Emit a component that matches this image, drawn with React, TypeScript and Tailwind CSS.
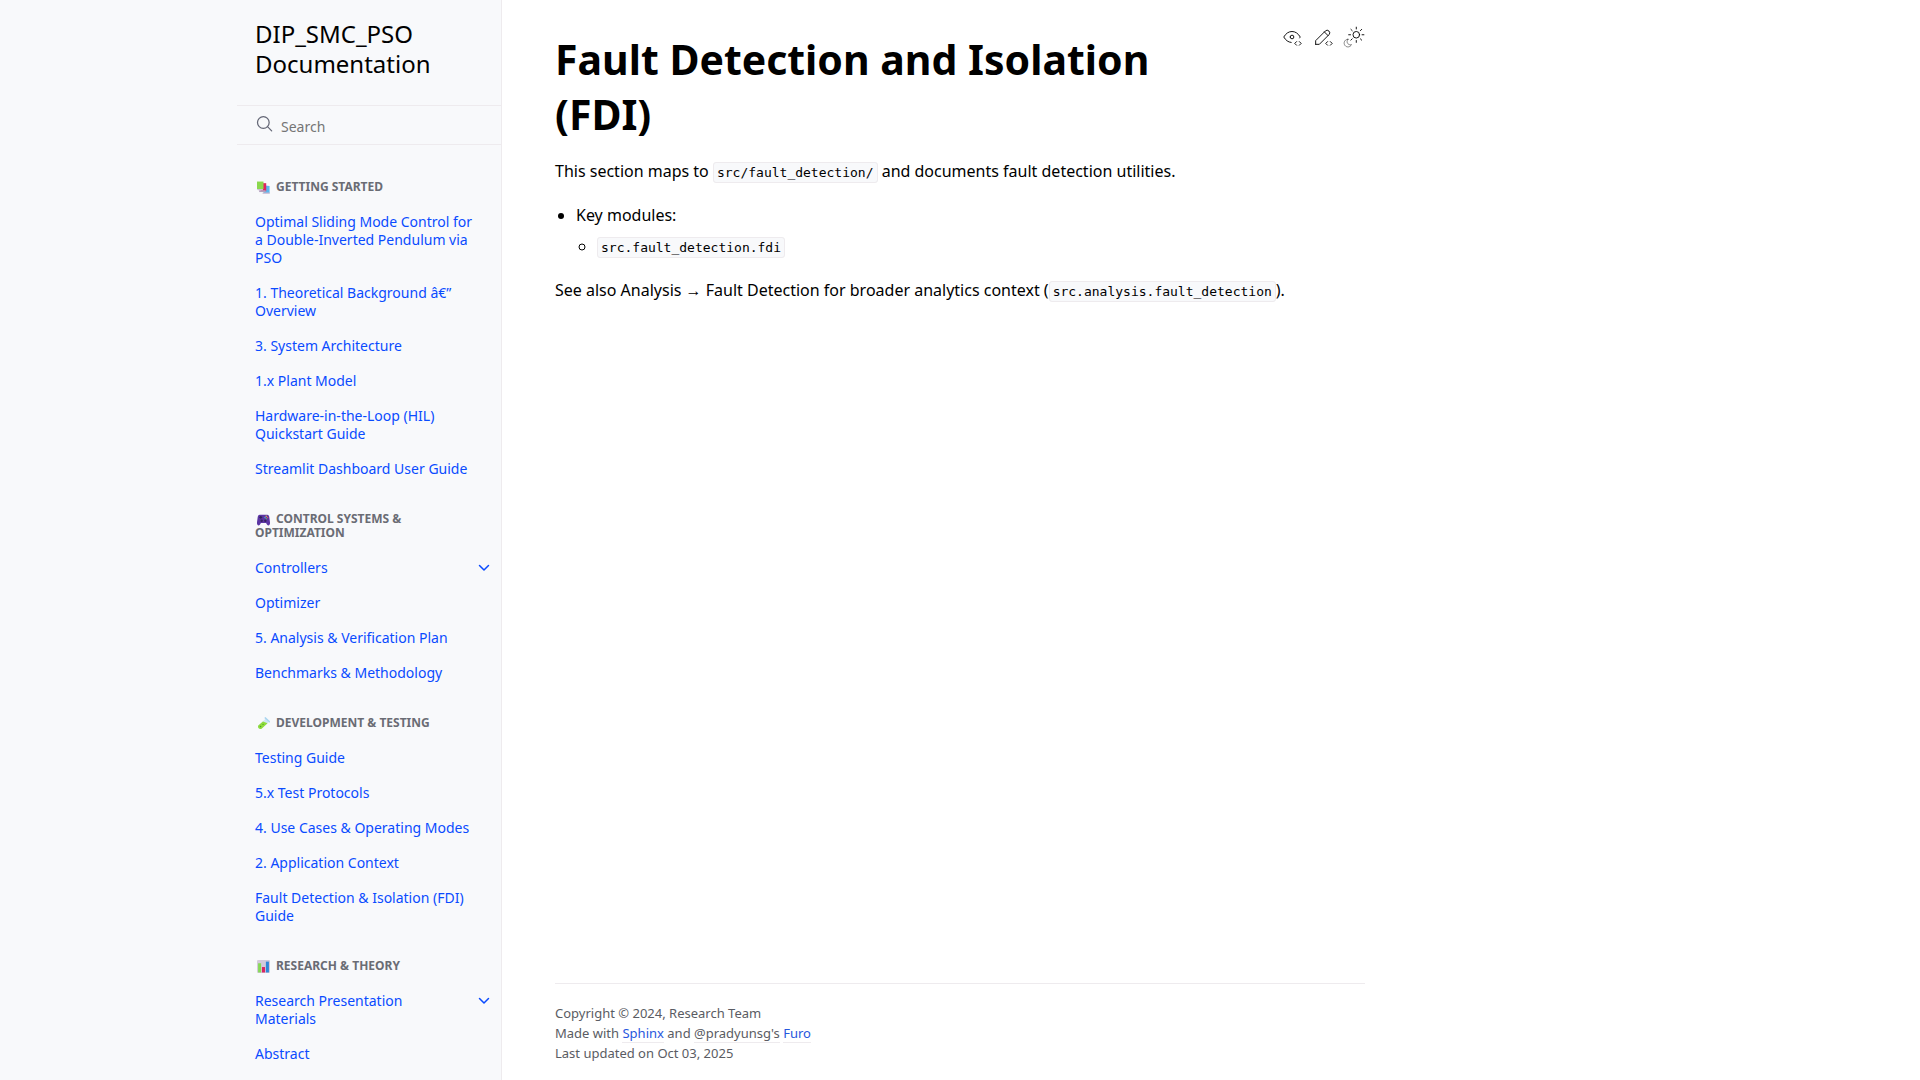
import type { ReactNode } from "react";

type NavItem = { label: string; expandable?: boolean };
type NavGroup = { caption: string; icon: ReactNode; items: NavItem[] };

function BooksIcon() {
  return (
    <svg className="inline-block h-[13px] w-[13px] align-[-3px]" viewBox="0 0 12 12" aria-hidden="true">
      <path d="M6 4l5.600.6v6.400H6z" fill="#5bb8ee" />
      <path d="M5.500 10.500h6.300v1.300H5z" fill="#c3b3cf" />
      <path d="M3.500 2h5v7.500h-5z" fill="#e0245e" />
      <path d="M2 8.500h6v1.700H2z" fill="#b3a0bd" />
      <path d="M0 .5h6v7H0z" fill="#8bd84e" />
      <path d="M0 7.300h5.500v1.300H.8z" fill="#cdbfd6" />
    </svg>
  );
}

function GamepadIcon() {
  return (
    <svg className="inline-block h-[13px] w-[13px] align-[-3px]" viewBox="0 0 12 12" aria-hidden="true">
      <path d="M2.500 1.500h7c1 0 1.500.8 1.800 2l.7 5c.2 1.500-.3 3-1.400 3-1 0-1.500-.8-2.200-2.300H3.600C2.900 10.700 2.400 11.500 1.400 11.500.3 11.500-.2 10 0 8.500l.7-5c.3-1.200.8-2 1.800-2z" fill="#5b35a3" />
      <path d="M2.200 4h2.600M3.500 2.700v2.600" stroke="#2d2450" strokeWidth="1" />
      <circle cx="8.500" cy="2.900" r=".7" fill="#e8c443" />
      <circle cx="9.700" cy="4.200" r=".7" fill="#d9506a" />
      <circle cx="7.400" cy="4.200" r=".7" fill="#46a5e0" />
      <circle cx="8.500" cy="5.400" r=".7" fill="#59c36a" />
      <circle cx="4.300" cy="7.200" r="1.100" fill="#35215f" />
      <circle cx="7.700" cy="7.200" r="1.100" fill="#35215f" />
    </svg>
  );
}

function TestTubeIcon() {
  return (
    <svg className="inline-block h-[13px] w-[13px] align-[-3px]" viewBox="0 0 12 12" aria-hidden="true">
      <path d="M8 1.500l3 3-6.800 6.300a2.200 2.200 0 0 1-3-3z" fill="#cfe6f5" />
      <path d="M5.500 4.200l4.200 1.500-5.500 5.100a2.200 2.200 0 0 1-3-3z" fill="#8fdc3c" />
      <path d="M7.600.8l3.900 3.600" stroke="#a9d5ef" strokeWidth="1.300" strokeLinecap="round" />
      <circle cx="3.300" cy="8.700" r=".7" fill="#4c9f2a" />
      <circle cx="5.600" cy="6.800" r=".6" fill="#4c9f2a" />
    </svg>
  );
}

function ChartIcon() {
  return (
    <svg className="inline-block h-[13px] w-[13px] align-[-3px]" viewBox="0 0 12 12" aria-hidden="true">
      <rect width="12" height="12" rx="1.200" fill="#d3cadb" />
      <rect x="1" y="3" width="2.800" height="8.500" fill="#86d955" />
      <rect x="4.600" y="6.500" width="2.800" height="5" fill="#d92662" />
      <rect x="8.200" y="1.500" width="2.800" height="10" fill="#2f87d8" />
    </svg>
  );
}

const groups: NavGroup[] = [
  {
    caption: "Getting Started",
    icon: <BooksIcon />,
    items: [
      { label: "Optimal Sliding Mode Control for a Double-Inverted Pendulum via PSO" },
      { label: "1. Theoretical Background â€” Overview" },
      { label: "3. System Architecture" },
      { label: "1.x Plant Model" },
      { label: "Hardware-in-the-Loop (HIL) Quickstart Guide" },
      { label: "Streamlit Dashboard User Guide" },
    ],
  },
  {
    caption: "Control Systems & Optimization",
    icon: <GamepadIcon />,
    items: [
      { label: "Controllers", expandable: true },
      { label: "Optimizer" },
      { label: "5. Analysis & Verification Plan" },
      { label: "Benchmarks & Methodology" },
    ],
  },
  {
    caption: "Development & Testing",
    icon: <TestTubeIcon />,
    items: [
      { label: "Testing Guide" },
      { label: "5.x Test Protocols" },
      { label: "4. Use Cases & Operating Modes" },
      { label: "2. Application Context" },
      { label: "Fault Detection & Isolation (FDI) Guide" },
    ],
  },
  {
    caption: "Research & Theory",
    icon: <ChartIcon />,
    items: [
      { label: "Research Presentation Materials", expandable: true },
      { label: "Abstract" },
    ],
  },
];

function Sidebar() {
  return (
    <aside className="flex h-screen w-[calc(50%-458px)] min-w-[265px] shrink-0 justify-end overflow-hidden border-r border-[#eeebee] bg-[#f8f9fb]">
      <div className="w-66">
        <a href="#home" className="block px-[18px] pt-[19px] pb-[26px] text-2xl leading-[30px] text-black">
          DIP_SMC_PSO Documentation
        </a>
        <form role="search" className="flex h-10 items-center border-y border-[#eeebee] pl-[18px]">
          <svg className="h-5 w-5 shrink-0 text-[#646776]" viewBox="0 0 24 24" fill="none" stroke="currentColor" strokeWidth="1.5" strokeLinecap="round" strokeLinejoin="round" aria-hidden="true">
            <circle cx="10" cy="9" r="7" />
            <path d="M20 19l-5-5" />
          </svg>
          <input type="search" aria-label="Search" placeholder="Search" className="ml-1.5 h-full min-w-0 flex-1 bg-transparent pt-0.5 text-sm outline-none placeholder:text-[#757575]" />
        </form>
        <nav aria-label="Documentation" className="pt-[9px]">
          {groups.map((g) => (
            <section key={g.caption}>
              <h2 className="px-[18px] pt-[26px] pb-2.5 text-xs leading-[14px] font-bold text-[#6a6c74] uppercase">
                <span className="mr-1.5 ml-0.5">{g.icon}</span>
                {g.caption}
              </h2>
              <ul>
                {g.items.map((item) => (
                  <li key={item.label} className="flex items-start">
                    <a href="#page" className="min-w-0 flex-1 pt-[9px] pr-5 pb-2 pl-[18px] text-sm leading-[18px] text-[#0a4bff]">
                      {item.label}
                    </a>
                    {item.expandable && (
                      <button type="button" aria-label={`Expand ${item.label}`} className="flex h-[35px] w-[35px] shrink-0 items-center justify-center text-[#0a4bff]">
                        <svg className="h-4 w-4" viewBox="0 0 16 16" fill="none" stroke="currentColor" strokeWidth="1.5" strokeLinecap="round" strokeLinejoin="round" aria-hidden="true">
                          <path d="M3.500 5.500l4.500 4.500 4.500-4.500" />
                        </svg>
                      </button>
                    )}
                  </li>
                ))}
              </ul>
            </section>
          ))}
        </nav>
      </div>
    </aside>
  );
}

function CodeMark() {
  return (
    <>
      <path d="M20 21l2-2-2-2" />
      <path d="M17 17l-2 2 2 2" />
    </>
  );
}

function PageTools() {
  const svg = {
    viewBox: "0 0 24 24",
    fill: "none",
    stroke: "currentColor",
    strokeWidth: 1,
    strokeLinecap: "round",
    strokeLinejoin: "round",
    "aria-hidden": true,
  } as const;
  return (
    <div className="float-right ml-18 flex gap-[9px] text-black">
      <a href="#source" aria-label="View this page">
        <svg className="h-[22px] w-[22px]" {...svg}>
          <path d="M10 12a2 2 0 1 0 4 0a2 2 0 0 0-4 0" />
          <path d="M11.11 17.958c-3.209-.307-5.91-2.293-8.11-5.958c2.4-4 5.4-6 9-6c3.6 0 6.6 2 9 6c-.21.352-.427.688-.647 1.008" />
          <CodeMark />
        </svg>
      </a>
      <a href="#edit" aria-label="Edit this page">
        <svg className="h-[22px] w-[22px]" {...svg}>
          <path d="M4 20h4l10.5-10.5a2.828 2.828 0 1 0-4-4l-10.5 10.5v4" />
          <path d="M13.5 6.5l4 4" />
          <CodeMark />
        </svg>
      </a>
      <button type="button" aria-label="Toggle Light / Dark / Auto color theme">
        <svg className="h-[22px] w-[22px]" {...svg}>
          <path opacity="0.5" d="M5.411 14.504C5.471 14.504 5.532 14.504 5.591 14.504C3.639 16.319 4.383 19.569 6.931 20.352C7.693 20.586 8.512 20.551 9.25 20.252C8.023 23.207 4.056 23.725 2.11 21.184C.166 18.642 1.702 14.949 4.874 14.536C5.051 14.512 5.231 14.5 5.411 14.5z" />
          <path d="M14.5 3.250v-2M14.500 15.850v2M10.044 5.094L8.630 3.680M19 14.050l1.414 1.414M8.200 9.550h-2M20.800 9.550h2M10.044 14.006L8.630 15.420M19 5.050l1.414-1.414" />
          <circle cx="14.5" cy="9.55" r="3.6" />
        </svg>
      </button>
    </div>
  );
}

function Code({ children }: { children: ReactNode }) {
  return (
    <code className="rounded-[3px] border border-[#eeebee] bg-[#f8f9fb] px-[3px] py-[2px] font-['DejaVu_Sans_Mono',monospace] text-[13px]">
      {children}
    </code>
  );
}

export default function App() {
  return (
    <div className="flex min-h-screen bg-white font-['Noto_Sans',sans-serif] text-black">
      <Sidebar />
      <main className="flex min-h-screen max-w-[916px] min-w-0 flex-1 flex-col px-[53px] pt-[26px] pb-[17px]">
        <article className="flex-1 text-base leading-[26px]">
          <PageTools />
          <h1 className="pt-1.5 text-[41px] leading-[55px] font-bold">Fault Detection and Isolation (FDI)</h1>
          <p className="mt-4">
            This section maps to <Code>src/fault_detection/</Code> and documents fault detection utilities.
          </p>
          <ul className="mt-4 list-disc pl-[21px]">
            <li>
              Key modules:
              <ul className="mt-[5px] list-[circle] pl-[21px]">
                <li>
                  <Code>src.fault_detection.fdi</Code>
                </li>
              </ul>
            </li>
          </ul>
          <p className="mt-4">
            See also Analysis → Fault Detection for broader analytics context (<Code>src.analysis.fault_detection</Code>).
          </p>
        </article>
        <footer className="border-t border-[#eeebee] pt-[19px] text-[13px] leading-5 text-[#5a5c63]">
          <p>Copyright © 2024, Research Team</p>
          <p>
            Made with <a href="#sphinx" className="border-b border-[#eeebee] text-[#2757dd]">Sphinx</a> and{" "}
            <a href="#author" className="border-b border-[#eeebee]">@pradyunsg's</a>{" "}
            <a href="#furo" className="border-b border-[#eeebee] text-[#2757dd]">Furo</a>
          </p>
          <p>Last updated on Oct 03, 2025</p>
        </footer>
      </main>
    </div>
  );
}
